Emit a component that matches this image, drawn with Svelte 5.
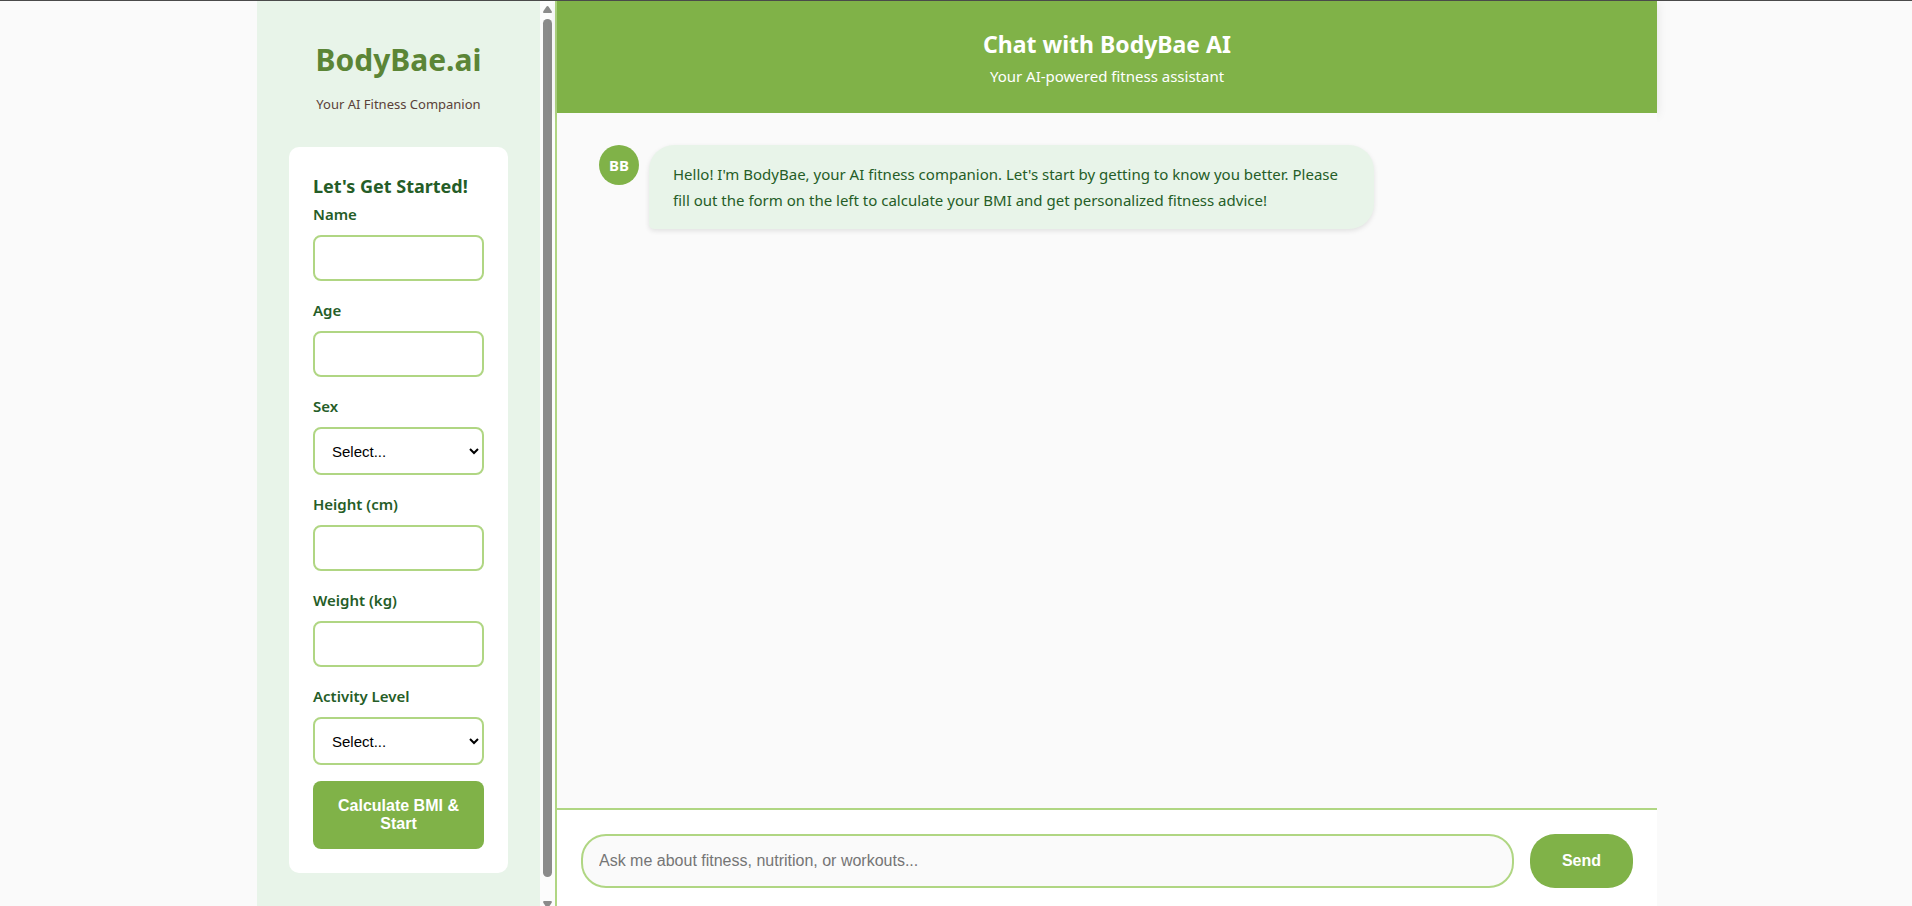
<script>
  const options = {
    sex: ['Female', 'Male'],
    activity: ['Low', 'Moderate', 'High']
  };

  const fields = [
    { id: 'name', label: 'Name', type: 'text' },
    { id: 'age', label: 'Age', type: 'text' },
    { id: 'sex', label: 'Sex', type: 'select' },
    { id: 'height', label: 'Height (cm)', type: 'text' },
    { id: 'weight', label: 'Weight (kg)', type: 'text' },
    { id: 'activity', label: 'Activity Level', type: 'select' }
  ];
</script>

<div class="page">
  <div class="app">
    <aside class="sidebar">
      <div class="panel">
        <header class="brand">
          <h1>BodyBae.ai</h1>
          <p>Your AI Fitness Companion</p>
        </header>
        <form class="card" onsubmit={(e) => e.preventDefault()}>
          <h2>Let's Get Started!</h2>
          {#each fields as field (field.id)}
            <div class="field">
              <label for={field.id}>{field.label}</label>
              {#if field.type === 'select'}
                <select id={field.id}>
                  <option value="">Select...</option>
                  {#each options[field.id] as option}
                    <option>{option}</option>
                  {/each}
                </select>
              {:else}
                <input id={field.id} type="text" />
              {/if}
            </div>
          {/each}
          <button class="calculate" type="submit">Calculate BMI &amp; Start</button>
        </form>
      </div>
      <div class="scrollbar" aria-hidden="true">
        <svg width="9" height="7" viewBox="0 0 9 7"><path d="M4.5 0 Q5.2 0 5.8 .9 L8.7 5.3 Q9.3 7 7.8 7 H1.2 Q-.3 7 .3 5.3 L3.2 .9 Q3.8 0 4.5 0Z" fill="#8b8b8b" /></svg>
        <div class="thumb"></div>
        <svg width="9" height="7" viewBox="0 0 9 7"><path d="M4.5 7 Q5.2 7 5.8 6.1 L8.7 1.7 Q9.3 0 7.8 0 H1.2 Q-.3 0 .3 1.7 L3.2 6.1 Q3.8 7 4.5 7Z" fill="#8b8b8b" /></svg>
      </div>
    </aside>

    <main class="chat">
      <header class="chat-header">
        <h2>Chat with BodyBae AI</h2>
        <p>Your AI-powered fitness assistant</p>
      </header>
      <section class="messages">
        <div class="message">
          <div class="avatar">BB</div>
          <div class="bubble">
            Hello! I'm BodyBae, your AI fitness companion. Let's start by getting to know you better. Please
            fill out the form on the left to calculate your BMI and get personalized fitness advice!
          </div>
        </div>
      </section>
      <form class="composer" onsubmit={(e) => e.preventDefault()}>
        <input type="text" aria-label="Message" placeholder="Ask me about fitness, nutrition, or workouts..." />
        <button type="submit">Send</button>
      </form>
    </main>
  </div>
</div>

<style>
  :global(body) {
    margin: 0;
    background: #fafafa;
  }

  .page, .page * {
    box-sizing: border-box;
  }

  h1, h2, p {
    margin: 0;
  }

  .page {
    height: 100vh;
    padding-left: 2px;
    border-top: 1px solid #4a4a4a;
    overflow: hidden;
    font-family: "Noto Sans", sans-serif;
    font-size: 15px;
    line-height: 26px;
    color: #255d27;
  }

  .app {
    display: flex;
    max-width: 1400px;
    height: 100%;
    margin: 0 auto;
  }

  .sidebar {
    display: flex;
    flex: none;
    width: 300px;
    border-right: 2px solid #b0d683;
    background: #e8f4e9;
    overflow: hidden;
  }

  .panel {
    flex: 1;
    min-width: 0;
    padding: 32px;
  }

  .brand {
    margin-bottom: 31px;
    text-align: center;
    white-space: nowrap;
  }

  .brand h1 {
    margin-bottom: 7px;
    font-size: 30px;
    line-height: 53px;
    color: #5b8536;
  }

  .brand p {
    font-size: 13px;
    line-height: 23px;
    color: #5a4138;
  }

  .card {
    padding: 24px;
    border-radius: 10px;
    background: #fff;
  }

  .card h2 {
    font-size: 18px;
    line-height: 30px;
    white-space: nowrap;
  }

  .field {
    display: flex;
    flex-direction: column;
    gap: 8px;
    margin-bottom: 16px;
  }

  label {
    font-weight: 600;
  }

  .field input,
  .field select {
    width: 100%;
    height: 46px;
    padding: 0 13px;
    border: 2px solid #b0d683;
    border-radius: 8px;
    background: #fff;
    font-family: "Liberation Sans", Arial, sans-serif;
    font-size: 15px;
    color: #000;
  }

  .field select {
    height: 48px;
    padding: 0 0 0 13px;
  }

  button {
    border: 0;
    background: #80b248;
    color: #fff;
    font-family: "Liberation Sans", Arial, sans-serif;
    font-size: 16px;
    font-weight: 700;
    line-height: 18px;
  }

  .calculate {
    width: 100%;
    padding: 16px;
    border-radius: 8px;
  }

  .scrollbar {
    display: flex;
    flex: none;
    flex-direction: column;
    align-items: center;
    gap: 6px;
    width: 15px;
    margin-bottom: -2px;
    padding-top: 5px;
    background: #fcfcfc;
  }

  .scrollbar svg {
    flex: none;
  }

  .thumb {
    flex: 1;
    width: 9px;
    margin-bottom: 18px;
    border-radius: 5px;
    background: #8b8b8b;
  }

  .chat {
    display: flex;
    flex: 1;
    flex-direction: column;
    min-width: 0;
  }

  .chat-header {
    padding: 24px;
    background: #80b248;
    box-shadow: 0 2px 10px rgba(0, 0, 0, 0.1);
    color: #fff;
    text-align: center;
  }

  .chat-header h2 {
    font-size: 23px;
    line-height: 38px;
  }

  .messages {
    position: relative;
    flex: 1;
    padding: 32px;
    background: #fafafa;
  }

  .message {
    display: flex;
    align-items: flex-start;
  }

  .avatar {
    flex: none;
    width: 40px;
    height: 40px;
    margin: 0 10px;
    border-radius: 50%;
    background: #80b248;
    color: #fff;
    font-weight: 700;
    line-height: 40px;
    text-align: center;
  }

  .bubble {
    max-width: 70%;
    padding: 16px 24px;
    border-radius: 25px 25px 25px 5px;
    background: #e8f4e9;
    box-shadow: 0 2px 5px rgba(0, 0, 0, 0.1);
  }

  .composer {
    display: flex;
    gap: 16px;
    padding: 24px 24px 18px;
    border-top: 2px solid #b0d683;
    background: #fff;
  }

  .composer input {
    flex: 1;
    min-width: 0;
    height: 54px;
    padding: 0 16px;
    border: 2px solid #b0d683;
    border-radius: 25px;
    background: #fafafa;
    font-family: "Liberation Sans", Arial, sans-serif;
    font-size: 16px;
  }

  .composer input::placeholder {
    color: #757575;
  }

  .composer button {
    padding: 0 32px;
    border-radius: 25px;
  }
</style>
